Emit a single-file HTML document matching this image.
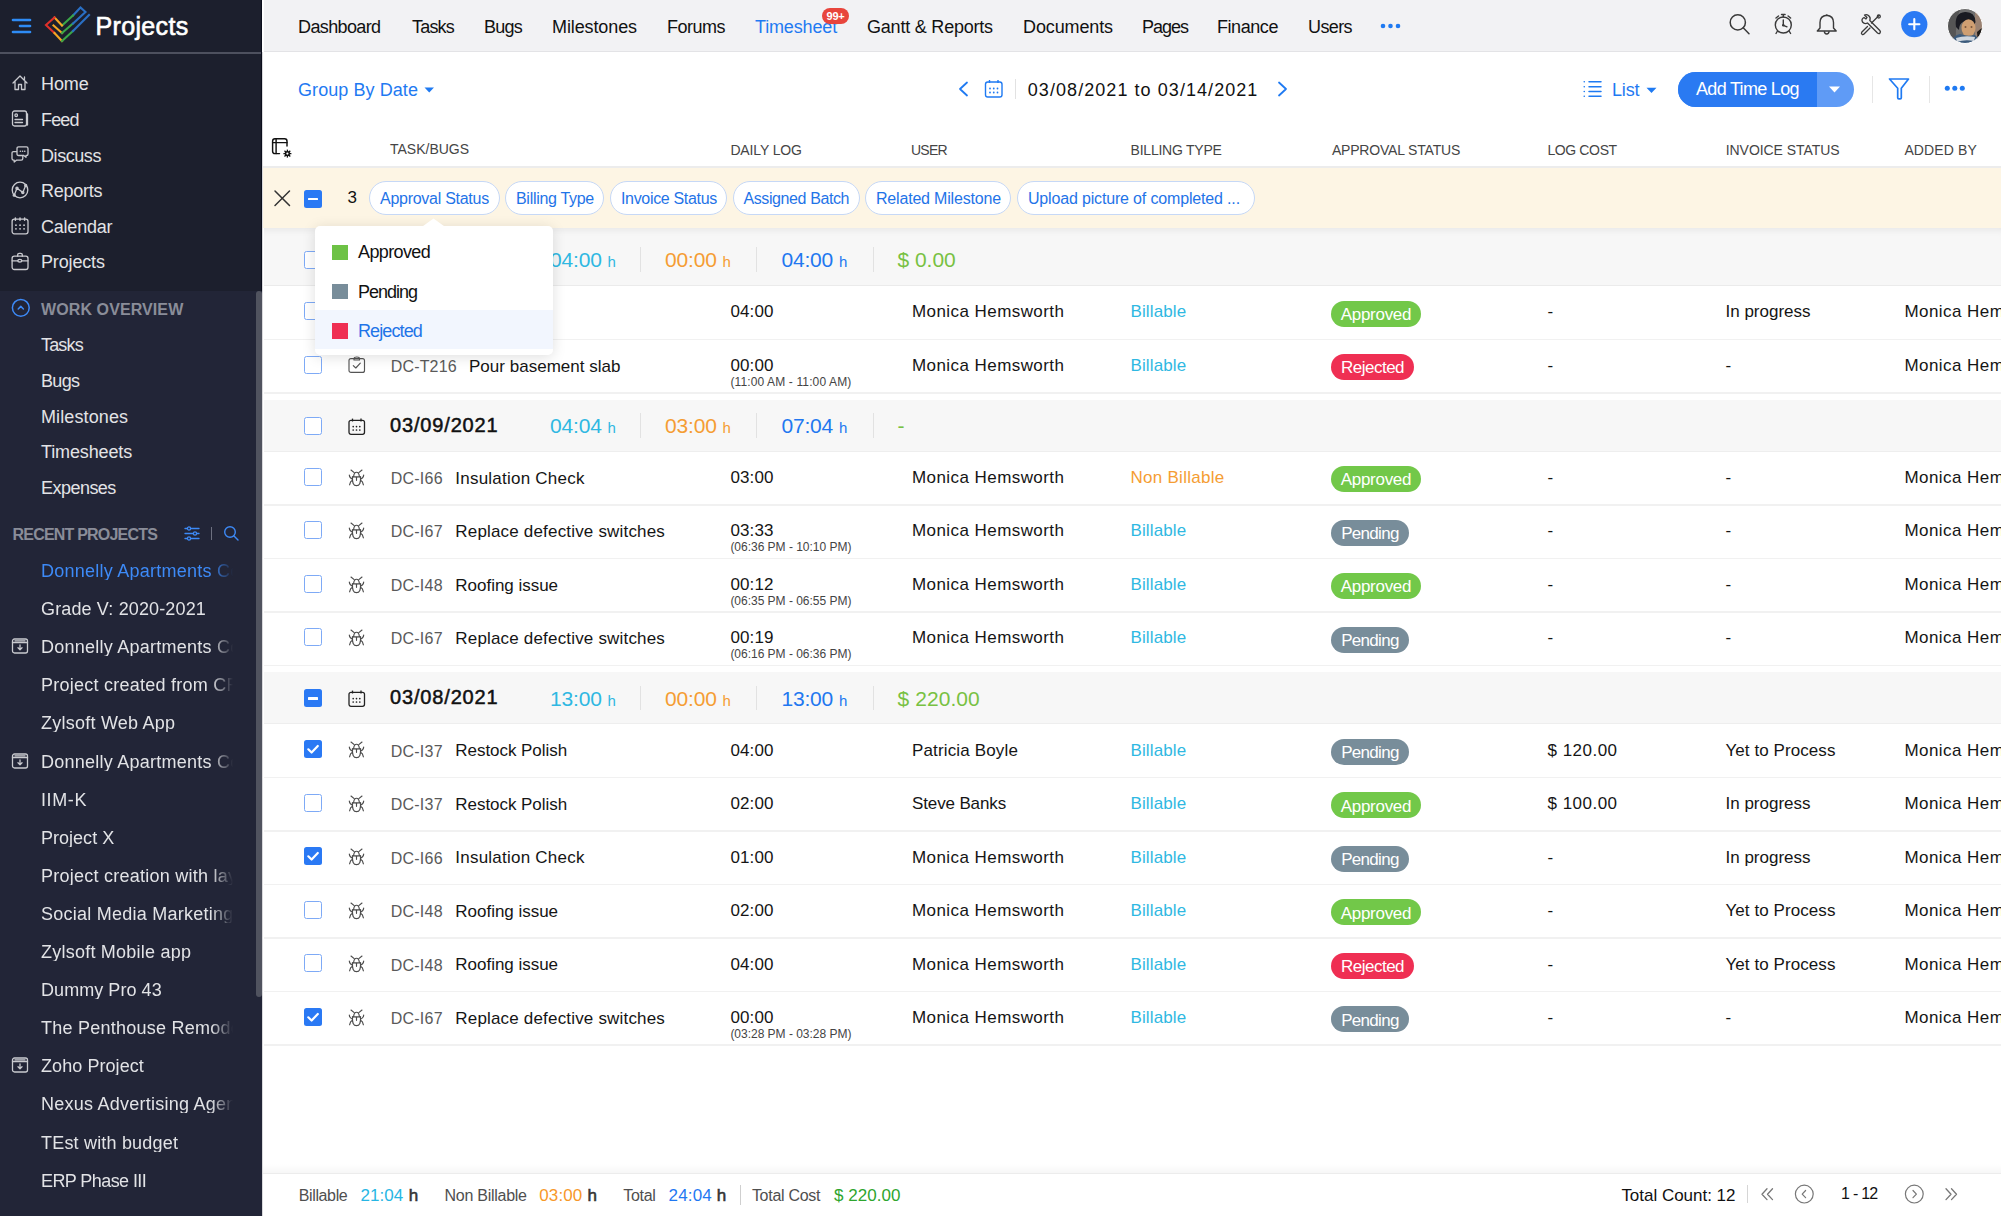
<!DOCTYPE html><html><head><meta charset="utf-8"><style>
*{box-sizing:border-box}
html,body{margin:0;padding:0;width:2001px;height:1216px;overflow:hidden;background:#fff;font-family:"Liberation Sans",sans-serif}
div{position:absolute;white-space:nowrap}
svg{position:absolute;overflow:visible}
.fade{-webkit-mask-image:linear-gradient(to right,#000 0,#000 170px,transparent 192px);width:192px;overflow:hidden}
</style></head><body>
<div style="left:0;top:0;width:262px;height:291px;background:#1c1f2d"></div>
<div style="left:0;top:291px;width:262px;height:925px;background:#222537"></div>
<div style="left:0;top:52px;width:262px;height:1.5px;background:#4d505e"></div>
<div style="left:261px;top:0;width:1px;height:291px;background:#0b0e1c"></div>
<div style="left:256px;top:291px;width:6px;height:706px;background:#50535f;border-radius:3px"></div>
<svg style="left:0;top:0" width="60" height="52"><g stroke="#2e8bf5" stroke-width="2.6" stroke-linecap="round"><line x1="13" y1="20" x2="30" y2="20"/><line x1="20" y1="26" x2="30" y2="26"/><line x1="13" y1="32" x2="30" y2="32"/></g></svg>
<svg style="left:0;top:0" width="95" height="52"><g fill="none" stroke-width="2.1" stroke-linecap="square" stroke-linejoin="miter">
<polyline stroke="#f6a623" points="53.5,25.5 62,33"/>
<polyline stroke="#3aa648" points="62,33 73,23.5"/>
<polyline stroke="#2a6fc4" points="73,23.5 85.5,12 80.5,7.5 73,15.5"/>
<polyline stroke="#3aa648" points="73,15.5 62,25.5"/>
<polyline stroke="#f6a623" points="62,25.5 54.5,17.5"/>
<polyline stroke="#e0302a" points="54.5,17.5 46,25 54.5,33"/>
<polyline stroke="#f6a623" points="54.5,33 62,41"/>
<polyline stroke="#3aa648" points="62,41 73,31"/>
<polyline stroke="#2a6fc4" points="73,31 89,15"/>
</g></svg>
<div style="left:95.5px;top:13.5px;font-size:25px;line-height:25px;color:#ffffff;-webkit-text-stroke:0.6px #ffffff;letter-spacing:0.34px;">Projects</div>
<div style="left:41.0px;top:75.3px;font-size:18px;line-height:18px;color:#e2e3e6;letter-spacing:-0.11px;">Home</div>
<div style="left:41.0px;top:110.9px;font-size:18px;line-height:18px;color:#e2e3e6;letter-spacing:-0.86px;">Feed</div>
<div style="left:41.0px;top:146.5px;font-size:18px;line-height:18px;color:#e2e3e6;letter-spacing:-0.43px;">Discuss</div>
<div style="left:41.0px;top:182.1px;font-size:18px;line-height:18px;color:#e2e3e6;letter-spacing:-0.25px;">Reports</div>
<div style="left:41.0px;top:217.7px;font-size:18px;line-height:18px;color:#e2e3e6;letter-spacing:-0.22px;">Calendar</div>
<div style="left:41.0px;top:253.3px;font-size:18px;line-height:18px;color:#e2e3e6;letter-spacing:-0.15px;">Projects</div>
<svg style="left:11px;top:73px" width="20" height="20" viewBox="0 0 20 20"><g fill="none" stroke="#c9cacf" stroke-width="1.3" stroke-linecap="round" stroke-linejoin="round"><path d="M2 10 L9 3 L16 10 M4 8.5 V16.5 H7.5 V11.5 H10.5 V16.5 H14 V8.5 M13.5 4 V6.5"/></g></svg>
<svg style="left:11px;top:109px" width="20" height="20" viewBox="0 0 20 20"><g fill="none" stroke="#c9cacf" stroke-width="1.3" stroke-linecap="round" stroke-linejoin="round"><rect x="1.5" y="2" width="14" height="15" rx="2"/><circle cx="5.2" cy="6.2" r="1.3"/><line x1="4" y1="10.5" x2="11.5" y2="10.5"/><line x1="4" y1="13.5" x2="11.5" y2="13.5"/><path d="M15.5 5 H16.5 V16"/></g></svg>
<svg style="left:11px;top:145px" width="20" height="20" viewBox="0 0 20 20"><g fill="none" stroke="#c9cacf" stroke-width="1.3" stroke-linecap="round" stroke-linejoin="round"><path d="M5.6 6.6 H2.6 Q1 6.6 1 8.2 V13.6 Q1 15.2 2.6 15.2 H3.2 V17 L5.4 15.2 H10.2 Q11.8 15.2 11.8 13.6 V11.2"/><path d="M7.6 1.9 H15.4 Q17 1.9 17 3.5 V8.9 Q17 10.5 15.4 10.5 H15 V12.3 L12.8 10.5 H7.6 Q6 10.5 6 8.9 V3.5 Q6 1.9 7.6 1.9 Z"/><g stroke-width="1.5"><line x1="9.3" y1="6.2" x2="9.4" y2="6.2"/><line x1="11.5" y1="6.2" x2="11.6" y2="6.2"/><line x1="13.7" y1="6.2" x2="13.8" y2="6.2"/></g></g></svg>
<svg style="left:11px;top:181px" width="20" height="20" viewBox="0 0 20 20"><g fill="none" stroke="#c9cacf" stroke-width="1.3" stroke-linecap="round" stroke-linejoin="round"><circle cx="9" cy="9" r="7.8"/><path d="M3.2 14.2 L6 7.3 L11.8 11.4 L14.7 4.5"/><circle cx="6" cy="7.3" r="1.1"/><circle cx="11.8" cy="11.4" r="1.1"/><circle cx="14.7" cy="4.5" r="1"/><circle cx="3.2" cy="14.2" r="1"/></g></svg>
<svg style="left:11px;top:217px" width="20" height="20" viewBox="0 0 20 20"><g fill="none" stroke="#c9cacf" stroke-width="1.3" stroke-linecap="round" stroke-linejoin="round"><rect x="1.1" y="2.2" width="15.9" height="14.6" rx="2.2"/><g stroke-width="1.5"><line x1="4.4" y1="1" x2="4.4" y2="3.2"/><line x1="9" y1="1" x2="9" y2="3.2"/><line x1="13.6" y1="1" x2="13.6" y2="3.2"/></g><g stroke-width="1.7"><line x1="4.9" y1="8.2" x2="5" y2="8.2"/><line x1="9" y1="8.2" x2="9.1" y2="8.2"/><line x1="13" y1="8.2" x2="13.1" y2="8.2"/><line x1="4.9" y1="11.8" x2="5" y2="11.8"/><line x1="9" y1="11.8" x2="9.1" y2="11.8"/><line x1="13" y1="11.8" x2="13.1" y2="11.8"/></g></g></svg>
<svg style="left:11px;top:252px" width="20" height="20" viewBox="0 0 20 20"><g fill="none" stroke="#c9cacf" stroke-width="1.3" stroke-linecap="round" stroke-linejoin="round"><rect x="1.1" y="4.2" width="15.9" height="13.3" rx="2.2"/><path d="M6.7 4.2 V2.8 Q6.7 1.3 8.2 1.3 H9.8 Q11.3 1.3 11.3 2.8 V4.2"/><line x1="1.1" y1="8.8" x2="6.8" y2="8.8"/><line x1="10.8" y1="8.8" x2="17" y2="8.8"/><ellipse cx="8.8" cy="8.7" rx="2" ry="1.3"/></g></svg>
<svg style="left:11px;top:299px" width="20" height="20"><circle cx="9.8" cy="8.8" r="8.4" fill="none" stroke="#3d8af7" stroke-width="1.5"/><path d="M7.2 10 L9.8 7.4 L12.4 10" fill="none" stroke="#3d8af7" stroke-width="1.5" stroke-linecap="round" stroke-linejoin="round"/></svg>
<div style="left:41.0px;top:302.0px;font-size:16px;line-height:16px;color:#8a8d99;font-weight:bold;letter-spacing:0.10px;">WORK OVERVIEW</div>
<div style="left:41.0px;top:336.3px;font-size:18px;line-height:18px;color:#e2e3e6;letter-spacing:-0.82px;">Tasks</div>
<div style="left:41.0px;top:371.9px;font-size:18px;line-height:18px;color:#e2e3e6;letter-spacing:-0.66px;">Bugs</div>
<div style="left:41.0px;top:407.6px;font-size:18px;line-height:18px;color:#e2e3e6;letter-spacing:0.12px;">Milestones</div>
<div style="left:41.0px;top:443.2px;font-size:18px;line-height:18px;color:#e2e3e6;letter-spacing:-0.13px;">Timesheets</div>
<div style="left:41.0px;top:478.9px;font-size:18px;line-height:18px;color:#e2e3e6;letter-spacing:-0.53px;">Expenses</div>
<div style="left:12.6px;top:527.0px;font-size:16px;line-height:16px;color:#8a8d99;font-weight:bold;letter-spacing:-0.80px;">RECENT PROJECTS</div>
<svg style="left:184px;top:525px" width="18" height="18"><g fill="none" stroke="#3d8af7" stroke-width="1.3" stroke-linecap="round"><line x1="1" y1="3.5" x2="15" y2="3.5"/><line x1="1" y1="8.5" x2="15" y2="8.5"/><line x1="1" y1="13.5" x2="15" y2="13.5"/><circle cx="5" cy="3.5" r="1.6" fill="#222537"/><circle cx="11" cy="8.5" r="1.6" fill="#222537"/><circle cx="5" cy="13.5" r="1.6" fill="#222537"/></g></svg>
<div style="left:211px;top:527px;width:1.2px;height:13px;background:#6d7080"></div>
<svg style="left:223px;top:525px" width="18" height="18"><g fill="none" stroke="#3d8af7" stroke-width="1.4" stroke-linecap="round"><circle cx="7" cy="7" r="5.3"/><line x1="11" y1="11" x2="15" y2="15"/></g></svg>
<div class="fade" style="left:41.0px;top:562.0px;font-size:18px;line-height:18px;color:#3d8af7;letter-spacing:0.25px;">Donnelly Apartments Construction</div>
<div class="fade" style="left:41.0px;top:600.1px;font-size:18px;line-height:18px;color:#e2e3e6;letter-spacing:0.14px;">Grade V: 2020-2021</div>
<div class="fade" style="left:41.0px;top:638.2px;font-size:18px;line-height:18px;color:#e2e3e6;letter-spacing:0.25px;">Donnelly Apartments Construction</div>
<svg style="left:11px;top:637.2px" width="20" height="20" viewBox="0 0 20 20"><g fill="none" stroke="#c9cacf" stroke-width="1.3" stroke-linecap="round" stroke-linejoin="round"><rect x="1.5" y="2" width="15" height="14" rx="2"/><line x1="1.5" y1="5.5" x2="16.5" y2="5.5"/><line x1="4" y1="3.8" x2="14" y2="3.8"/><path d="M9 8 V12.5 M7 10.8 L9 12.7 L11 10.8"/></g></svg>
<div class="fade" style="left:41.0px;top:676.3px;font-size:18px;line-height:18px;color:#e2e3e6;letter-spacing:0.25px;">Project created from CRM</div>
<div class="fade" style="left:41.0px;top:714.4px;font-size:18px;line-height:18px;color:#e2e3e6;letter-spacing:0.24px;">Zylsoft Web App</div>
<div class="fade" style="left:41.0px;top:752.5px;font-size:18px;line-height:18px;color:#e2e3e6;letter-spacing:0.25px;">Donnelly Apartments Construction</div>
<svg style="left:11px;top:751.5px" width="20" height="20" viewBox="0 0 20 20"><g fill="none" stroke="#c9cacf" stroke-width="1.3" stroke-linecap="round" stroke-linejoin="round"><rect x="1.5" y="2" width="15" height="14" rx="2"/><line x1="1.5" y1="5.5" x2="16.5" y2="5.5"/><line x1="4" y1="3.8" x2="14" y2="3.8"/><path d="M9 8 V12.5 M7 10.8 L9 12.7 L11 10.8"/></g></svg>
<div class="fade" style="left:41.0px;top:790.6px;font-size:18px;line-height:18px;color:#e2e3e6;letter-spacing:0.60px;">IIM-K</div>
<div class="fade" style="left:41.0px;top:828.7px;font-size:18px;line-height:18px;color:#e2e3e6;letter-spacing:0.02px;">Project X</div>
<div class="fade" style="left:41.0px;top:866.8px;font-size:18px;line-height:18px;color:#e2e3e6;letter-spacing:0.25px;">Project creation with layout</div>
<div class="fade" style="left:41.0px;top:904.9px;font-size:18px;line-height:18px;color:#e2e3e6;letter-spacing:0.25px;">Social Media Marketing</div>
<div class="fade" style="left:41.0px;top:943.0px;font-size:18px;line-height:18px;color:#e2e3e6;letter-spacing:0.23px;">Zylsoft Mobile app</div>
<div class="fade" style="left:41.0px;top:981.1px;font-size:18px;line-height:18px;color:#e2e3e6;letter-spacing:0.06px;">Dummy Pro 43</div>
<div class="fade" style="left:41.0px;top:1019.2px;font-size:18px;line-height:18px;color:#e2e3e6;letter-spacing:0.25px;">The Penthouse Remodel</div>
<div class="fade" style="left:41.0px;top:1057.3px;font-size:18px;line-height:18px;color:#e2e3e6;letter-spacing:0.07px;">Zoho Project</div>
<svg style="left:11px;top:1056.3px" width="20" height="20" viewBox="0 0 20 20"><g fill="none" stroke="#c9cacf" stroke-width="1.3" stroke-linecap="round" stroke-linejoin="round"><rect x="1.5" y="2" width="15" height="14" rx="2"/><line x1="1.5" y1="5.5" x2="16.5" y2="5.5"/><line x1="4" y1="3.8" x2="14" y2="3.8"/><path d="M9 8 V12.5 M7 10.8 L9 12.7 L11 10.8"/></g></svg>
<div class="fade" style="left:41.0px;top:1095.4px;font-size:18px;line-height:18px;color:#e2e3e6;letter-spacing:0.25px;">Nexus Advertising Agency</div>
<div class="fade" style="left:41.0px;top:1133.5px;font-size:18px;line-height:18px;color:#e2e3e6;letter-spacing:0.19px;">TEst with budget</div>
<div class="fade" style="left:41.0px;top:1171.6px;font-size:18px;line-height:18px;color:#e2e3e6;letter-spacing:-0.58px;">ERP Phase III</div>
<div style="left:262px;top:0;width:1739px;height:53px;background:#fff"></div><div style="left:264px;top:0;width:1737px;height:52px;background:#f2f2f4;border-bottom:1px solid #e3e3e6"></div>
<div style="left:262px;top:52px;width:1px;height:1164px;background:#d9d9dc"></div>
<div style="left:298.0px;top:18.0px;font-size:18px;line-height:18px;color:#111111;letter-spacing:-0.62px;">Dashboard</div>
<div style="left:412.0px;top:18.0px;font-size:18px;line-height:18px;color:#111111;letter-spacing:-0.80px;">Tasks</div>
<div style="left:484.0px;top:18.0px;font-size:18px;line-height:18px;color:#111111;letter-spacing:-0.76px;">Bugs</div>
<div style="left:552.0px;top:18.0px;font-size:18px;line-height:18px;color:#111111;letter-spacing:-0.11px;">Milestones</div>
<div style="left:667.0px;top:18.0px;font-size:18px;line-height:18px;color:#111111;letter-spacing:-0.51px;">Forums</div>
<div style="left:755.0px;top:18.0px;font-size:18px;line-height:18px;color:#1f7af2;letter-spacing:-0.15px;">Timesheet</div>
<div style="left:867.0px;top:18.0px;font-size:18px;line-height:18px;color:#111111;letter-spacing:-0.21px;">Gantt &amp; Reports</div>
<div style="left:1023.0px;top:18.0px;font-size:18px;line-height:18px;color:#111111;letter-spacing:-0.12px;">Documents</div>
<div style="left:1142.0px;top:18.0px;font-size:18px;line-height:18px;color:#111111;letter-spacing:-1.01px;">Pages</div>
<div style="left:1217.0px;top:18.0px;font-size:18px;line-height:18px;color:#111111;letter-spacing:-0.44px;">Finance</div>
<div style="left:1308.0px;top:18.0px;font-size:18px;line-height:18px;color:#111111;letter-spacing:-0.60px;">Users</div>
<svg style="left:1380px;top:22px" width="22" height="8"><g fill="#1f7af2"><circle cx="3" cy="4" r="2.3"/><circle cx="10.5" cy="4" r="2.3"/><circle cx="18" cy="4" r="2.3"/></g></svg>
<div style="left:822px;top:8px;width:27px;height:16px;border-radius:8px;background:#e8453c;color:#fff;font-size:11px;line-height:16px;text-align:center;font-weight:bold;letter-spacing:-0.3px">99+</div>
<svg style="left:1720px;top:0" width="45" height="52"><g fill="none" stroke="#3a3a3a" stroke-width="1.5" stroke-linecap="round"><circle cx="17.8" cy="22.4" r="7.6"/><line x1="23.2" y1="27.8" x2="29" y2="33.8"/></g></svg>
<svg style="left:1760px;top:0" width="45" height="52"><g fill="none" stroke="#3a3a3a" stroke-width="1.4" stroke-linecap="round" stroke-linejoin="round"><circle cx="23.3" cy="25" r="8"/><path d="M23.3 20 V25.3 L27 26.8"/><path d="M21.5 14.5 H25.1 M23.3 14.5 V17"/><path d="M16 18 L18.5 16 M30.6 18 L28.1 16"/><path d="M17.5 31 L16 33.5 M29.1 31 L30.6 33.5"/></g><circle cx="23.3" cy="25.2" r="1.3" fill="#3a3a3a"/></svg>
<svg style="left:1800px;top:0" width="45" height="52"><g fill="none" stroke="#3a3a3a" stroke-width="1.4" stroke-linejoin="round"><path d="M17.3 31 H36.2 L33.5 28 V22.5 Q33.5 16 26.7 15.3 Q20 16 20 22.5 V28 Z"/><path d="M24.3 31.3 Q24.5 34 26.7 34 Q28.9 34 29.1 31.3"/><line x1="26.7" y1="14.5" x2="26.7" y2="15.5"/></g></svg>
<svg style="left:1850px;top:0" width="45" height="52"><g fill="none" stroke="#3a3a3a" stroke-width="1.3" stroke-linecap="round" stroke-linejoin="round"><path d="M14 17.5 Q11 19 12.5 22 Q14.5 24.5 17.5 23 L27.5 33 Q29 34.2 30 33 Q31 32 29.8 30.5 L19.8 20.5 Q21 17.5 18.5 15.5 Q16.5 14 14.5 15 L17 17.5 L16 19 Z"/><path d="M29 15.5 L27.5 17 L21.5 23 M17.5 26.5 L11.7 32.3 Q11 33.5 12 34.2 Q13 35 14 34 L20 28"/><circle cx="28.8" cy="16.5" r="1.5"/></g></svg>
<svg style="left:1900px;top:10px" width="28" height="28"><circle cx="14.3" cy="14.2" r="13.1" fill="#2a7af4"/><g stroke="#fff" stroke-width="2.1" stroke-linecap="round"><line x1="9.2" y1="14.2" x2="19.4" y2="14.2"/><line x1="14.3" y1="9.1" x2="14.3" y2="19.3"/></g></svg>
<svg style="left:1947px;top:8px" width="36" height="36"><defs><clipPath id="av"><circle cx="18" cy="18" r="17.4"/></clipPath></defs><g clip-path="url(#av)">
<rect width="36" height="36" fill="#6e6e6e"/><path d="M0 0 H14 Q8 10 9 36 H0 Z" fill="#555"/><rect x="28" y="0" width="8" height="36" fill="#9a8272"/><path d="M30 24 L36 19 L36 36 L31 36 Z" fill="#1e1a18"/>
<path d="M9 19 Q7 5 18 4 Q28 3.5 28.5 14 L27 18 Q22 12 16 14 Q12 16 12 22 Z" fill="#1a1b22"/>
<ellipse cx="21.5" cy="20" rx="7" ry="8.8" fill="#cf9f72"/>
<ellipse cx="18.5" cy="19" rx="1" ry="0.7" fill="#5a3b28"/><ellipse cx="24.5" cy="19" rx="1" ry="0.7" fill="#5a3b28"/>
<path d="M4 36 Q6 27 13 26 Q20 29 28 27 Q32 30 31 36 Z" fill="#3c5b7c"/>
<path d="M9 30 Q18 27 28 29 L27 33 Q18 31 10 34 Z" fill="#cfd6de"/>
</g><circle cx="18" cy="18" r="17.5" fill="none" stroke="#fff" stroke-width="1"/></svg>
<div style="left:298.0px;top:80.5px;font-size:18px;line-height:18px;color:#1f7af2;letter-spacing:0.07px;">Group By Date</div>
<svg style="left:424px;top:86px" width="12" height="8"><path d="M0.5 1.5 L10 1.5 L5.25 6.5 Z" fill="#1f7af2"/></svg>
<svg style="left:955px;top:78px" width="16" height="22"><path d="M12 4.5 L5 11 L12 17.5" fill="none" stroke="#1f7af2" stroke-width="1.8" stroke-linecap="round" stroke-linejoin="round"/></svg>
<svg style="left:984px;top:79px" width="21" height="20"><g fill="none" stroke="#1f7af2" stroke-width="1.4"><rect x="1.5" y="3" width="16.5" height="15" rx="2.2"/><line x1="5.5" y1="1" x2="5.5" y2="4"/><line x1="14" y1="1" x2="14" y2="4"/></g><g fill="#1f7af2"><circle cx="6" cy="9.5" r=".9"/><circle cx="9.75" cy="9.5" r=".9"/><circle cx="13.5" cy="9.5" r=".9"/><circle cx="6" cy="13.5" r=".9"/><circle cx="9.75" cy="13.5" r=".9"/><circle cx="13.5" cy="13.5" r=".9"/></g></svg>
<div style="left:1015px;top:78.5px;width:1px;height:20.5px;background:#e2e2e2"></div>
<div style="left:1027.8px;top:80.6px;font-size:18px;line-height:18px;color:#111;letter-spacing:1.06px;">03/08/2021 to 03/14/2021</div>
<svg style="left:1274px;top:78px" width="16" height="22"><path d="M5 4.5 L12 11 L5 17.5" fill="none" stroke="#1f7af2" stroke-width="1.8" stroke-linecap="round" stroke-linejoin="round"/></svg>
<svg style="left:1582px;top:79px" width="22" height="20"><g stroke="#1f7af2" stroke-width="1.5" stroke-linecap="round"><line x1="2.2" y1="2.8" x2="2.3" y2="2.8"/><line x1="2.2" y1="7.7" x2="2.3" y2="7.7"/><line x1="2.2" y1="12.6" x2="2.3" y2="12.6"/><line x1="2.2" y1="17.3" x2="2.3" y2="17.3"/><line x1="7" y1="2.8" x2="19" y2="2.8"/><line x1="7" y1="7.7" x2="19" y2="7.7"/><line x1="7" y1="12.6" x2="19" y2="12.6"/><line x1="7" y1="17.3" x2="19" y2="17.3"/></g></svg>
<div style="left:1612.0px;top:80.7px;font-size:18px;line-height:18px;color:#1f7af2;letter-spacing:-0.18px;">List</div>
<svg style="left:1646px;top:86px" width="12" height="8"><path d="M0.5 1.8 L10.5 1.8 L5.5 7 Z" fill="#1f7af2"/></svg>
<div style="left:1678px;top:71.5px;width:176px;height:35px;border-radius:17.5px;background:#5f9bf6;overflow:hidden"><div style="left:0;top:0;width:139px;height:35px;background:#2a7af2"></div></div>
<div style="left:1696.0px;top:79.6px;font-size:18px;line-height:18px;color:#ffffff;letter-spacing:-0.69px;">Add Time Log</div>
<svg style="left:1828px;top:85px" width="14" height="9"><path d="M1 1.5 L12 1.5 L6.5 7.5 Z" fill="#fff"/></svg>
<div style="left:1872px;top:75.7px;width:1px;height:27.3px;background:#e6e6e6"></div>
<svg style="left:1886px;top:76px" width="26" height="26"><path d="M3.5 3 H22.5 L15.3 12.2 V21.8 Q15.3 22.8 14.2 22.8 H12.8 Q11.7 22.8 11.7 21.8 V12.2 Z" fill="none" stroke="#1f7af2" stroke-width="1.7" stroke-linejoin="round"/></svg>
<div style="left:1928.5px;top:75.7px;width:1px;height:27.3px;background:#e6e6e6"></div>
<svg style="left:1942px;top:83px" width="26" height="11"><g fill="#1f7af2"><circle cx="5.3" cy="5.3" r="2.5"/><circle cx="12.8" cy="5.3" r="2.5"/><circle cx="20.3" cy="5.3" r="2.5"/></g></svg>
<svg style="left:270px;top:136px" width="24" height="24"><g fill="none" stroke="#111" stroke-width="1.45" stroke-linecap="round" stroke-linejoin="round"><path d="M9.5 17.6 H5 Q2.6 17.6 2.6 15.2 V5.2 Q2.6 2.8 5 2.8 H14.6 Q17 2.8 17 5.2 V10"/><line x1="2.6" y1="6.6" x2="17" y2="6.6"/><line x1="6.1" y1="3" x2="6.1" y2="17.6"/></g><g transform="translate(17.4,17.6)"><g stroke="#111" stroke-width="1.3"><line x1="0" y1="-4" x2="0" y2="4"/><line x1="-4" y1="0" x2="4" y2="0"/><line x1="-2.9" y1="-2.9" x2="2.9" y2="2.9"/><line x1="-2.9" y1="2.9" x2="2.9" y2="-2.9"/></g><circle r="2.6" fill="#111"/><circle r="1.1" fill="#fff"/></g></svg>
<div style="left:390.0px;top:141.5px;font-size:14px;line-height:14px;color:#454545;letter-spacing:-0.00px;">TASK/BUGS</div>
<div style="left:730.4px;top:142.5px;font-size:14px;line-height:14px;color:#454545;letter-spacing:-0.13px;">DAILY LOG</div>
<div style="left:911.0px;top:142.5px;font-size:14px;line-height:14px;color:#454545;letter-spacing:-0.75px;">USER</div>
<div style="left:1130.6px;top:142.5px;font-size:14px;line-height:14px;color:#454545;letter-spacing:-0.24px;">BILLING TYPE</div>
<div style="left:1331.9px;top:142.5px;font-size:14px;line-height:14px;color:#454545;letter-spacing:-0.18px;">APPROVAL STATUS</div>
<div style="left:1547.4px;top:142.5px;font-size:14px;line-height:14px;color:#454545;letter-spacing:-0.37px;">LOG COST</div>
<div style="left:1725.7px;top:142.5px;font-size:14px;line-height:14px;color:#454545;letter-spacing:-0.05px;">INVOICE STATUS</div>
<div style="left:1904.4px;top:142.5px;font-size:14px;line-height:14px;color:#454545;letter-spacing:0.13px;">ADDED BY</div>
<div style="left:263px;top:166px;width:1738px;height:2px;background:#ececec"></div>
<div style="left:263px;top:168px;width:1738px;height:60px;background:#fdf5e4"></div>
<svg style="left:270px;top:186px" width="24" height="24"><g stroke="#333" stroke-width="1.5" stroke-linecap="round"><line x1="5" y1="5" x2="19.5" y2="19.5"/><line x1="19.5" y1="5" x2="5" y2="19.5"/></g></svg>
<div style="left:304px;top:190px;width:18px;height:18px;border-radius:2.5px;background:#2a79f4"><div style="left:4.2px;top:7.8px;width:9.6px;height:2.6px;background:#fff;border-radius:0.5px"></div></div>
<div style="left:347.6px;top:189.0px;font-size:17px;line-height:17px;color:#111;">3</div>
<div style="left:369px;top:181px;width:131.0px;height:33.5px;border-radius:17px;border:1px solid #c6d8f6;background:#fff"></div>
<div style="left:380.0px;top:190.5px;font-size:16px;line-height:16px;color:#1f74e8;letter-spacing:-0.27px;">Approval Status</div>
<div style="left:505px;top:181px;width:99.0px;height:33.5px;border-radius:17px;border:1px solid #c6d8f6;background:#fff"></div>
<div style="left:516.0px;top:190.5px;font-size:16px;line-height:16px;color:#1f74e8;letter-spacing:-0.30px;">Billing Type</div>
<div style="left:610px;top:181px;width:117.0px;height:33.5px;border-radius:17px;border:1px solid #c6d8f6;background:#fff"></div>
<div style="left:621.0px;top:190.5px;font-size:16px;line-height:16px;color:#1f74e8;letter-spacing:-0.33px;">Invoice Status</div>
<div style="left:733.2px;top:181px;width:126.4px;height:33.5px;border-radius:17px;border:1px solid #c6d8f6;background:#fff"></div>
<div style="left:743.4px;top:190.5px;font-size:16px;line-height:16px;color:#1f74e8;letter-spacing:-0.39px;">Assigned Batch</div>
<div style="left:865.1px;top:181px;width:146.3px;height:33.5px;border-radius:17px;border:1px solid #c6d8f6;background:#fff"></div>
<div style="left:876.0px;top:190.5px;font-size:16px;line-height:16px;color:#1f74e8;letter-spacing:-0.19px;">Related Milestone</div>
<div style="left:1017.4px;top:181px;width:237.2px;height:33.5px;border-radius:17px;border:1px solid #c6d8f6;background:#fff"></div>
<div style="left:1027.9px;top:190.5px;font-size:16px;line-height:16px;color:#1f74e8;letter-spacing:-0.16px;">Upload picture of completed ...</div>
<div style="left:264px;top:228px;width:1737px;height:57.5px;background:#f7f7f7;border-bottom:1.2px solid #ebebeb;box-shadow:inset 0 7px 7px -5px rgba(0,0,0,0.07)"></div>
<div style="left:304px;top:251px;width:18px;height:18px;border-radius:2.5px;border:1.6px solid #7eaaf6;background:#fff"></div>
<div style="left:550.0px;top:249.3px;font-size:21px;line-height:21px;color:#2fb8e2;letter-spacing:-0.18px;">04:00</div>
<div style="left:607.5px;top:254.3px;font-size:15px;line-height:15px;color:#2fb8e2;">h</div>
<div style="left:665.0px;top:249.3px;font-size:21px;line-height:21px;color:#f59d33;letter-spacing:-0.18px;">00:00</div>
<div style="left:722.5px;top:254.3px;font-size:15px;line-height:15px;color:#f59d33;">h</div>
<div style="left:781.4px;top:249.3px;font-size:21px;line-height:21px;color:#2277f0;letter-spacing:-0.18px;">04:00</div>
<div style="left:838.9px;top:254.3px;font-size:15px;line-height:15px;color:#2277f0;">h</div>
<div style="left:640.4px;top:247px;width:1px;height:24.5px;background:#e2e2e2"></div>
<div style="left:755.5px;top:247px;width:1px;height:24.5px;background:#e2e2e2"></div>
<div style="left:872.5px;top:247px;width:1px;height:24.5px;background:#e2e2e2"></div>
<div style="left:897.6px;top:249.3px;font-size:21px;line-height:21px;color:#78c142;letter-spacing:-0.06px;">$ 0.00</div>
<div style="left:264px;top:338.75px;width:1737px;height:1.5px;background:#f1f1f1"></div>
<div style="left:304px;top:302px;width:18px;height:18px;border-radius:2.5px;border:1.6px solid #7eaaf6;background:#fff"></div>
<svg style="left:348px;top:302px" width="18" height="18"><g fill="none" stroke="#555" stroke-width="1.15" stroke-linecap="round" stroke-linejoin="round"><rect x="1" y="2.6" width="15.5" height="13.8" rx="2"/><path d="M6 2.6 Q6 1 8.75 1 Q11.5 1 11.5 2.6 V4 H6 Z"/><path d="M5.3 9.6 L7.8 12 L12.3 7.2"/></g></svg>
<div style="left:390.8px;top:305.4px;font-size:16px;line-height:16px;color:#5a5a5a;letter-spacing:0.15px;">DC-T215</div>
<div style="left:469.0px;top:304.2px;font-size:17px;line-height:17px;color:#151515;">Form work</div>
<div style="left:730.4px;top:303.4px;font-size:17px;line-height:17px;color:#151515;letter-spacing:0.15px;">04:00</div>
<div style="left:912.0px;top:303.4px;font-size:17px;line-height:17px;color:#151515;letter-spacing:0.43px;">Monica Hemsworth</div>
<div style="left:1130.5px;top:303.4px;font-size:17px;line-height:17px;color:#2fb8e2;letter-spacing:0.12px;">Billable</div>
<div style="left:1331.2px;top:300.6px;width:89.5px;height:26.2px;border-radius:13px;background:#72c849"></div><div style="left:1340.7px;top:305.9px;font-size:17px;line-height:17px;color:#fff;letter-spacing:-0.28px;">Approved</div>
<div style="left:1547.5px;top:303.4px;font-size:17px;line-height:17px;color:#151515;">-</div>
<div style="left:1725.5px;top:303.4px;font-size:17px;line-height:17px;color:#151515;letter-spacing:-0.00px;">In progress</div>
<div style="left:1904.5px;top:303.4px;font-size:17px;line-height:17px;color:#151515;letter-spacing:0.43px;">Monica Hemsworth</div>
<div style="left:264px;top:392.25px;width:1737px;height:1.5px;background:#f1f1f1"></div>
<div style="left:304px;top:355.5px;width:18px;height:18px;border-radius:2.5px;border:1.6px solid #7eaaf6;background:#fff"></div>
<svg style="left:348px;top:355.5px" width="18" height="18"><g fill="none" stroke="#555" stroke-width="1.15" stroke-linecap="round" stroke-linejoin="round"><rect x="1" y="2.6" width="15.5" height="13.8" rx="2"/><path d="M6 2.6 Q6 1 8.75 1 Q11.5 1 11.5 2.6 V4 H6 Z"/><path d="M5.3 9.6 L7.8 12 L12.3 7.2"/></g></svg>
<div style="left:390.8px;top:358.9px;font-size:16px;line-height:16px;color:#5a5a5a;letter-spacing:0.15px;">DC-T216</div>
<div style="left:469.0px;top:357.7px;font-size:17px;line-height:17px;color:#151515;letter-spacing:0.02px;">Pour basement slab</div>
<div style="left:730.4px;top:356.9px;font-size:17px;line-height:17px;color:#151515;letter-spacing:0.15px;">00:00</div>
<div style="left:730.4px;top:375.7px;font-size:12px;line-height:12px;color:#444;letter-spacing:0.13px;">(11:00 AM - 11:00 AM)</div>
<div style="left:912.0px;top:356.9px;font-size:17px;line-height:17px;color:#151515;letter-spacing:0.43px;">Monica Hemsworth</div>
<div style="left:1130.5px;top:356.9px;font-size:17px;line-height:17px;color:#2fb8e2;letter-spacing:0.12px;">Billable</div>
<div style="left:1331.2px;top:354.1px;width:82.5px;height:26.2px;border-radius:13px;background:#ef2f53"></div><div style="left:1341.0px;top:359.4px;font-size:17px;line-height:17px;color:#fff;letter-spacing:-0.51px;">Rejected</div>
<div style="left:1547.5px;top:356.9px;font-size:17px;line-height:17px;color:#151515;">-</div>
<div style="left:1725.5px;top:356.9px;font-size:17px;line-height:17px;color:#151515;">-</div>
<div style="left:1904.5px;top:356.9px;font-size:17px;line-height:17px;color:#151515;letter-spacing:0.43px;">Monica Hemsworth</div>
<div style="left:264px;top:399.5px;width:1737px;height:52px;background:#f7f7f7;border-bottom:1px solid #eeeeee"></div>
<div style="left:304px;top:416.5px;width:18px;height:18px;border-radius:2.5px;border:1.6px solid #7eaaf6;background:#fff"></div>
<svg style="left:348px;top:417.5px" width="18" height="18"><g fill="none" stroke="#222" stroke-width="1.3" stroke-linejoin="round"><rect x="1" y="2.3" width="15.5" height="14" rx="2"/><line x1="4.5" y1="0.6" x2="4.5" y2="3.5"/><line x1="13" y1="0.6" x2="13" y2="3.5"/></g><g fill="#222"><circle cx="5.2" cy="8.6" r=".85"/><circle cx="5.2" cy="12" r=".85"/><circle cx="8.5" cy="8.6" r=".85"/><circle cx="8.5" cy="12" r=".85"/><circle cx="11.8" cy="8.6" r=".85"/><circle cx="11.8" cy="12" r=".85"/></g></svg>
<div style="left:390.0px;top:414.6px;font-size:20px;line-height:20px;color:#111;-webkit-text-stroke:0.5px #111;letter-spacing:0.84px;">03/09/2021</div>
<div style="left:550.0px;top:415.0px;font-size:21px;line-height:21px;color:#2fb8e2;letter-spacing:-0.18px;">04:04</div>
<div style="left:607.5px;top:420.0px;font-size:15px;line-height:15px;color:#2fb8e2;">h</div>
<div style="left:665.0px;top:415.0px;font-size:21px;line-height:21px;color:#f59d33;letter-spacing:-0.18px;">03:00</div>
<div style="left:722.5px;top:420.0px;font-size:15px;line-height:15px;color:#f59d33;">h</div>
<div style="left:781.4px;top:415.0px;font-size:21px;line-height:21px;color:#2277f0;letter-spacing:-0.18px;">07:04</div>
<div style="left:838.9px;top:420.0px;font-size:15px;line-height:15px;color:#2277f0;">h</div>
<div style="left:640.4px;top:413.0px;width:1px;height:24.5px;background:#e2e2e2"></div>
<div style="left:755.5px;top:413.0px;width:1px;height:24.5px;background:#e2e2e2"></div>
<div style="left:872.5px;top:413.0px;width:1px;height:24.5px;background:#e2e2e2"></div>
<div style="left:897.6px;top:415.0px;font-size:21px;line-height:21px;color:#78c142;">-</div>
<div style="left:264px;top:504.25px;width:1737px;height:1.5px;background:#f1f1f1"></div>
<div style="left:304px;top:467.5px;width:18px;height:18px;border-radius:2.5px;border:1.6px solid #7eaaf6;background:#fff"></div>
<svg style="left:348px;top:467.5px" width="18" height="20"><g fill="none" stroke="#4d4d4d" stroke-width="1.15" stroke-linecap="round" stroke-linejoin="round"><path d="M3 2 L6.2 4.6 M14 2 L10.8 4.6"/><path d="M5.6 8.6 Q6 4.2 8.5 4.2 Q11 4.2 11.4 8.6"/><path d="M4.4 8.8 H12.6"/><path d="M4.5 8.8 Q3.8 17.6 8.5 17.6 Q13.2 17.6 12.5 8.8"/><path d="M8.5 9.2 V12.3"/><path d="M1.3 7 Q1.6 10.3 4.6 11.2 M4.4 12.2 Q2.2 13.2 1.6 16.8"/><path d="M15.7 7 Q15.4 10.3 12.4 11.2 M12.6 12.2 Q14.8 13.2 15.4 16.8"/></g></svg>
<div style="left:390.8px;top:470.9px;font-size:16px;line-height:16px;color:#5a5a5a;letter-spacing:0.21px;">DC-I66</div>
<div style="left:455.3px;top:469.7px;font-size:17px;line-height:17px;color:#151515;letter-spacing:0.23px;">Insulation Check</div>
<div style="left:730.4px;top:468.9px;font-size:17px;line-height:17px;color:#151515;letter-spacing:0.15px;">03:00</div>
<div style="left:912.0px;top:468.9px;font-size:17px;line-height:17px;color:#151515;letter-spacing:0.43px;">Monica Hemsworth</div>
<div style="left:1130.5px;top:468.9px;font-size:17px;line-height:17px;color:#f59d33;letter-spacing:0.27px;">Non Billable</div>
<div style="left:1331.2px;top:466.1px;width:89.5px;height:26.2px;border-radius:13px;background:#72c849"></div><div style="left:1340.7px;top:471.4px;font-size:17px;line-height:17px;color:#fff;letter-spacing:-0.28px;">Approved</div>
<div style="left:1547.5px;top:468.9px;font-size:17px;line-height:17px;color:#151515;">-</div>
<div style="left:1725.5px;top:468.9px;font-size:17px;line-height:17px;color:#151515;">-</div>
<div style="left:1904.5px;top:468.9px;font-size:17px;line-height:17px;color:#151515;letter-spacing:0.43px;">Monica Hemsworth</div>
<div style="left:264px;top:557.75px;width:1737px;height:1.5px;background:#f1f1f1"></div>
<div style="left:304px;top:521.0px;width:18px;height:18px;border-radius:2.5px;border:1.6px solid #7eaaf6;background:#fff"></div>
<svg style="left:348px;top:521.0px" width="18" height="20"><g fill="none" stroke="#4d4d4d" stroke-width="1.15" stroke-linecap="round" stroke-linejoin="round"><path d="M3 2 L6.2 4.6 M14 2 L10.8 4.6"/><path d="M5.6 8.6 Q6 4.2 8.5 4.2 Q11 4.2 11.4 8.6"/><path d="M4.4 8.8 H12.6"/><path d="M4.5 8.8 Q3.8 17.6 8.5 17.6 Q13.2 17.6 12.5 8.8"/><path d="M8.5 9.2 V12.3"/><path d="M1.3 7 Q1.6 10.3 4.6 11.2 M4.4 12.2 Q2.2 13.2 1.6 16.8"/><path d="M15.7 7 Q15.4 10.3 12.4 11.2 M12.6 12.2 Q14.8 13.2 15.4 16.8"/></g></svg>
<div style="left:390.8px;top:524.4px;font-size:16px;line-height:16px;color:#5a5a5a;letter-spacing:0.21px;">DC-I67</div>
<div style="left:455.3px;top:523.2px;font-size:17px;line-height:17px;color:#151515;letter-spacing:0.18px;">Replace defective switches</div>
<div style="left:730.4px;top:522.4px;font-size:17px;line-height:17px;color:#151515;letter-spacing:0.15px;">03:33</div>
<div style="left:730.4px;top:541.2px;font-size:12px;line-height:12px;color:#444;letter-spacing:-0.02px;">(06:36 PM - 10:10 PM)</div>
<div style="left:912.0px;top:522.4px;font-size:17px;line-height:17px;color:#151515;letter-spacing:0.43px;">Monica Hemsworth</div>
<div style="left:1130.5px;top:522.4px;font-size:17px;line-height:17px;color:#2fb8e2;letter-spacing:0.12px;">Billable</div>
<div style="left:1331.2px;top:519.6px;width:77.5px;height:26.2px;border-radius:13px;background:#788d9a"></div><div style="left:1341.2px;top:524.9px;font-size:17px;line-height:17px;color:#fff;letter-spacing:-0.70px;">Pending</div>
<div style="left:1547.5px;top:522.4px;font-size:17px;line-height:17px;color:#151515;">-</div>
<div style="left:1725.5px;top:522.4px;font-size:17px;line-height:17px;color:#151515;">-</div>
<div style="left:1904.5px;top:522.4px;font-size:17px;line-height:17px;color:#151515;letter-spacing:0.43px;">Monica Hemsworth</div>
<div style="left:264px;top:611.25px;width:1737px;height:1.5px;background:#f1f1f1"></div>
<div style="left:304px;top:574.5px;width:18px;height:18px;border-radius:2.5px;border:1.6px solid #7eaaf6;background:#fff"></div>
<svg style="left:348px;top:574.5px" width="18" height="20"><g fill="none" stroke="#4d4d4d" stroke-width="1.15" stroke-linecap="round" stroke-linejoin="round"><path d="M3 2 L6.2 4.6 M14 2 L10.8 4.6"/><path d="M5.6 8.6 Q6 4.2 8.5 4.2 Q11 4.2 11.4 8.6"/><path d="M4.4 8.8 H12.6"/><path d="M4.5 8.8 Q3.8 17.6 8.5 17.6 Q13.2 17.6 12.5 8.8"/><path d="M8.5 9.2 V12.3"/><path d="M1.3 7 Q1.6 10.3 4.6 11.2 M4.4 12.2 Q2.2 13.2 1.6 16.8"/><path d="M15.7 7 Q15.4 10.3 12.4 11.2 M12.6 12.2 Q14.8 13.2 15.4 16.8"/></g></svg>
<div style="left:390.8px;top:577.9px;font-size:16px;line-height:16px;color:#5a5a5a;letter-spacing:0.21px;">DC-I48</div>
<div style="left:455.3px;top:576.7px;font-size:17px;line-height:17px;color:#151515;letter-spacing:-0.02px;">Roofing issue</div>
<div style="left:730.4px;top:575.9px;font-size:17px;line-height:17px;color:#151515;letter-spacing:0.15px;">00:12</div>
<div style="left:730.4px;top:594.7px;font-size:12px;line-height:12px;color:#444;letter-spacing:-0.02px;">(06:35 PM - 06:55 PM)</div>
<div style="left:912.0px;top:575.9px;font-size:17px;line-height:17px;color:#151515;letter-spacing:0.43px;">Monica Hemsworth</div>
<div style="left:1130.5px;top:575.9px;font-size:17px;line-height:17px;color:#2fb8e2;letter-spacing:0.12px;">Billable</div>
<div style="left:1331.2px;top:573.1px;width:89.5px;height:26.2px;border-radius:13px;background:#72c849"></div><div style="left:1340.7px;top:578.4px;font-size:17px;line-height:17px;color:#fff;letter-spacing:-0.28px;">Approved</div>
<div style="left:1547.5px;top:575.9px;font-size:17px;line-height:17px;color:#151515;">-</div>
<div style="left:1725.5px;top:575.9px;font-size:17px;line-height:17px;color:#151515;">-</div>
<div style="left:1904.5px;top:575.9px;font-size:17px;line-height:17px;color:#151515;letter-spacing:0.43px;">Monica Hemsworth</div>
<div style="left:264px;top:664.75px;width:1737px;height:1.5px;background:#f1f1f1"></div>
<div style="left:304px;top:628.0px;width:18px;height:18px;border-radius:2.5px;border:1.6px solid #7eaaf6;background:#fff"></div>
<svg style="left:348px;top:628.0px" width="18" height="20"><g fill="none" stroke="#4d4d4d" stroke-width="1.15" stroke-linecap="round" stroke-linejoin="round"><path d="M3 2 L6.2 4.6 M14 2 L10.8 4.6"/><path d="M5.6 8.6 Q6 4.2 8.5 4.2 Q11 4.2 11.4 8.6"/><path d="M4.4 8.8 H12.6"/><path d="M4.5 8.8 Q3.8 17.6 8.5 17.6 Q13.2 17.6 12.5 8.8"/><path d="M8.5 9.2 V12.3"/><path d="M1.3 7 Q1.6 10.3 4.6 11.2 M4.4 12.2 Q2.2 13.2 1.6 16.8"/><path d="M15.7 7 Q15.4 10.3 12.4 11.2 M12.6 12.2 Q14.8 13.2 15.4 16.8"/></g></svg>
<div style="left:390.8px;top:631.4px;font-size:16px;line-height:16px;color:#5a5a5a;letter-spacing:0.21px;">DC-I67</div>
<div style="left:455.3px;top:630.2px;font-size:17px;line-height:17px;color:#151515;letter-spacing:0.18px;">Replace defective switches</div>
<div style="left:730.4px;top:629.4px;font-size:17px;line-height:17px;color:#151515;letter-spacing:0.15px;">00:19</div>
<div style="left:730.4px;top:648.2px;font-size:12px;line-height:12px;color:#444;letter-spacing:-0.02px;">(06:16 PM - 06:36 PM)</div>
<div style="left:912.0px;top:629.4px;font-size:17px;line-height:17px;color:#151515;letter-spacing:0.43px;">Monica Hemsworth</div>
<div style="left:1130.5px;top:629.4px;font-size:17px;line-height:17px;color:#2fb8e2;letter-spacing:0.12px;">Billable</div>
<div style="left:1331.2px;top:626.6px;width:77.5px;height:26.2px;border-radius:13px;background:#788d9a"></div><div style="left:1341.2px;top:631.9px;font-size:17px;line-height:17px;color:#fff;letter-spacing:-0.70px;">Pending</div>
<div style="left:1547.5px;top:629.4px;font-size:17px;line-height:17px;color:#151515;">-</div>
<div style="left:1725.5px;top:629.4px;font-size:17px;line-height:17px;color:#151515;">-</div>
<div style="left:1904.5px;top:629.4px;font-size:17px;line-height:17px;color:#151515;letter-spacing:0.43px;">Monica Hemsworth</div>
<div style="left:264px;top:672.2px;width:1737px;height:52px;background:#f7f7f7;border-bottom:1px solid #eeeeee"></div>
<div style="left:304px;top:689.2px;width:18px;height:18px;border-radius:2.5px;background:#2a79f4"><div style="left:4.2px;top:7.8px;width:9.6px;height:2.6px;background:#fff;border-radius:0.5px"></div></div>
<svg style="left:348px;top:690.2px" width="18" height="18"><g fill="none" stroke="#222" stroke-width="1.3" stroke-linejoin="round"><rect x="1" y="2.3" width="15.5" height="14" rx="2"/><line x1="4.5" y1="0.6" x2="4.5" y2="3.5"/><line x1="13" y1="0.6" x2="13" y2="3.5"/></g><g fill="#222"><circle cx="5.2" cy="8.6" r=".85"/><circle cx="5.2" cy="12" r=".85"/><circle cx="8.5" cy="8.6" r=".85"/><circle cx="8.5" cy="12" r=".85"/><circle cx="11.8" cy="8.6" r=".85"/><circle cx="11.8" cy="12" r=".85"/></g></svg>
<div style="left:390.0px;top:687.3px;font-size:20px;line-height:20px;color:#111;-webkit-text-stroke:0.5px #111;letter-spacing:0.84px;">03/08/2021</div>
<div style="left:550.0px;top:687.7px;font-size:21px;line-height:21px;color:#2fb8e2;letter-spacing:-0.18px;">13:00</div>
<div style="left:607.5px;top:692.7px;font-size:15px;line-height:15px;color:#2fb8e2;">h</div>
<div style="left:665.0px;top:687.7px;font-size:21px;line-height:21px;color:#f59d33;letter-spacing:-0.18px;">00:00</div>
<div style="left:722.5px;top:692.7px;font-size:15px;line-height:15px;color:#f59d33;">h</div>
<div style="left:781.4px;top:687.7px;font-size:21px;line-height:21px;color:#2277f0;letter-spacing:-0.18px;">13:00</div>
<div style="left:838.9px;top:692.7px;font-size:15px;line-height:15px;color:#2277f0;">h</div>
<div style="left:640.4px;top:685.7px;width:1px;height:24.5px;background:#e2e2e2"></div>
<div style="left:755.5px;top:685.7px;width:1px;height:24.5px;background:#e2e2e2"></div>
<div style="left:872.5px;top:685.7px;width:1px;height:24.5px;background:#e2e2e2"></div>
<div style="left:897.6px;top:687.7px;font-size:21px;line-height:21px;color:#78c142;letter-spacing:0.06px;">$ 220.00</div>
<div style="left:264px;top:776.95px;width:1737px;height:1.5px;background:#f1f1f1"></div>
<div style="left:304px;top:740.2px;width:18px;height:18px;border-radius:2.5px;background:#2a79f4"></div><svg style="left:304px;top:740.2px" width="18" height="18"><path d="M4.3 9.3 L7.6 12.5 L13.8 6" fill="none" stroke="#fff" stroke-width="2.2" stroke-linecap="round" stroke-linejoin="round"/></svg>
<svg style="left:348px;top:740.2px" width="18" height="20"><g fill="none" stroke="#4d4d4d" stroke-width="1.15" stroke-linecap="round" stroke-linejoin="round"><path d="M3 2 L6.2 4.6 M14 2 L10.8 4.6"/><path d="M5.6 8.6 Q6 4.2 8.5 4.2 Q11 4.2 11.4 8.6"/><path d="M4.4 8.8 H12.6"/><path d="M4.5 8.8 Q3.8 17.6 8.5 17.6 Q13.2 17.6 12.5 8.8"/><path d="M8.5 9.2 V12.3"/><path d="M1.3 7 Q1.6 10.3 4.6 11.2 M4.4 12.2 Q2.2 13.2 1.6 16.8"/><path d="M15.7 7 Q15.4 10.3 12.4 11.2 M12.6 12.2 Q14.8 13.2 15.4 16.8"/></g></svg>
<div style="left:390.8px;top:743.6px;font-size:16px;line-height:16px;color:#5a5a5a;letter-spacing:0.21px;">DC-I37</div>
<div style="left:455.3px;top:742.4px;font-size:17px;line-height:17px;color:#151515;letter-spacing:-0.05px;">Restock Polish</div>
<div style="left:730.4px;top:741.6px;font-size:17px;line-height:17px;color:#151515;letter-spacing:0.15px;">04:00</div>
<div style="left:912.0px;top:741.6px;font-size:17px;line-height:17px;color:#151515;letter-spacing:0.15px;">Patricia Boyle</div>
<div style="left:1130.5px;top:741.6px;font-size:17px;line-height:17px;color:#2fb8e2;letter-spacing:0.12px;">Billable</div>
<div style="left:1331.2px;top:738.8000000000001px;width:77.5px;height:26.2px;border-radius:13px;background:#788d9a"></div><div style="left:1341.2px;top:744.1px;font-size:17px;line-height:17px;color:#fff;letter-spacing:-0.70px;">Pending</div>
<div style="left:1547.5px;top:741.6px;font-size:17px;line-height:17px;color:#151515;letter-spacing:0.48px;">$ 120.00</div>
<div style="left:1725.5px;top:741.6px;font-size:17px;line-height:17px;color:#151515;letter-spacing:0.07px;">Yet to Process</div>
<div style="left:1904.5px;top:741.6px;font-size:17px;line-height:17px;color:#151515;letter-spacing:0.43px;">Monica Hemsworth</div>
<div style="left:264px;top:830.45px;width:1737px;height:1.5px;background:#f1f1f1"></div>
<div style="left:304px;top:793.7px;width:18px;height:18px;border-radius:2.5px;border:1.6px solid #7eaaf6;background:#fff"></div>
<svg style="left:348px;top:793.7px" width="18" height="20"><g fill="none" stroke="#4d4d4d" stroke-width="1.15" stroke-linecap="round" stroke-linejoin="round"><path d="M3 2 L6.2 4.6 M14 2 L10.8 4.6"/><path d="M5.6 8.6 Q6 4.2 8.5 4.2 Q11 4.2 11.4 8.6"/><path d="M4.4 8.8 H12.6"/><path d="M4.5 8.8 Q3.8 17.6 8.5 17.6 Q13.2 17.6 12.5 8.8"/><path d="M8.5 9.2 V12.3"/><path d="M1.3 7 Q1.6 10.3 4.6 11.2 M4.4 12.2 Q2.2 13.2 1.6 16.8"/><path d="M15.7 7 Q15.4 10.3 12.4 11.2 M12.6 12.2 Q14.8 13.2 15.4 16.8"/></g></svg>
<div style="left:390.8px;top:797.1px;font-size:16px;line-height:16px;color:#5a5a5a;letter-spacing:0.21px;">DC-I37</div>
<div style="left:455.3px;top:795.9px;font-size:17px;line-height:17px;color:#151515;letter-spacing:-0.05px;">Restock Polish</div>
<div style="left:730.4px;top:795.1px;font-size:17px;line-height:17px;color:#151515;letter-spacing:0.15px;">02:00</div>
<div style="left:912.0px;top:795.1px;font-size:17px;line-height:17px;color:#151515;letter-spacing:-0.13px;">Steve Banks</div>
<div style="left:1130.5px;top:795.1px;font-size:17px;line-height:17px;color:#2fb8e2;letter-spacing:0.12px;">Billable</div>
<div style="left:1331.2px;top:792.3000000000001px;width:89.5px;height:26.2px;border-radius:13px;background:#72c849"></div><div style="left:1340.7px;top:797.6px;font-size:17px;line-height:17px;color:#fff;letter-spacing:-0.28px;">Approved</div>
<div style="left:1547.5px;top:795.1px;font-size:17px;line-height:17px;color:#151515;letter-spacing:0.48px;">$ 100.00</div>
<div style="left:1725.5px;top:795.1px;font-size:17px;line-height:17px;color:#151515;letter-spacing:-0.00px;">In progress</div>
<div style="left:1904.5px;top:795.1px;font-size:17px;line-height:17px;color:#151515;letter-spacing:0.43px;">Monica Hemsworth</div>
<div style="left:264px;top:883.95px;width:1737px;height:1.5px;background:#f1f1f1"></div>
<div style="left:304px;top:847.2px;width:18px;height:18px;border-radius:2.5px;background:#2a79f4"></div><svg style="left:304px;top:847.2px" width="18" height="18"><path d="M4.3 9.3 L7.6 12.5 L13.8 6" fill="none" stroke="#fff" stroke-width="2.2" stroke-linecap="round" stroke-linejoin="round"/></svg>
<svg style="left:348px;top:847.2px" width="18" height="20"><g fill="none" stroke="#4d4d4d" stroke-width="1.15" stroke-linecap="round" stroke-linejoin="round"><path d="M3 2 L6.2 4.6 M14 2 L10.8 4.6"/><path d="M5.6 8.6 Q6 4.2 8.5 4.2 Q11 4.2 11.4 8.6"/><path d="M4.4 8.8 H12.6"/><path d="M4.5 8.8 Q3.8 17.6 8.5 17.6 Q13.2 17.6 12.5 8.8"/><path d="M8.5 9.2 V12.3"/><path d="M1.3 7 Q1.6 10.3 4.6 11.2 M4.4 12.2 Q2.2 13.2 1.6 16.8"/><path d="M15.7 7 Q15.4 10.3 12.4 11.2 M12.6 12.2 Q14.8 13.2 15.4 16.8"/></g></svg>
<div style="left:390.8px;top:850.6px;font-size:16px;line-height:16px;color:#5a5a5a;letter-spacing:0.21px;">DC-I66</div>
<div style="left:455.3px;top:849.4px;font-size:17px;line-height:17px;color:#151515;letter-spacing:0.23px;">Insulation Check</div>
<div style="left:730.4px;top:848.6px;font-size:17px;line-height:17px;color:#151515;letter-spacing:0.15px;">01:00</div>
<div style="left:912.0px;top:848.6px;font-size:17px;line-height:17px;color:#151515;letter-spacing:0.43px;">Monica Hemsworth</div>
<div style="left:1130.5px;top:848.6px;font-size:17px;line-height:17px;color:#2fb8e2;letter-spacing:0.12px;">Billable</div>
<div style="left:1331.2px;top:845.8000000000001px;width:77.5px;height:26.2px;border-radius:13px;background:#788d9a"></div><div style="left:1341.2px;top:851.1px;font-size:17px;line-height:17px;color:#fff;letter-spacing:-0.70px;">Pending</div>
<div style="left:1547.5px;top:848.6px;font-size:17px;line-height:17px;color:#151515;">-</div>
<div style="left:1725.5px;top:848.6px;font-size:17px;line-height:17px;color:#151515;letter-spacing:-0.00px;">In progress</div>
<div style="left:1904.5px;top:848.6px;font-size:17px;line-height:17px;color:#151515;letter-spacing:0.43px;">Monica Hemsworth</div>
<div style="left:264px;top:937.45px;width:1737px;height:1.5px;background:#f1f1f1"></div>
<div style="left:304px;top:900.7px;width:18px;height:18px;border-radius:2.5px;border:1.6px solid #7eaaf6;background:#fff"></div>
<svg style="left:348px;top:900.7px" width="18" height="20"><g fill="none" stroke="#4d4d4d" stroke-width="1.15" stroke-linecap="round" stroke-linejoin="round"><path d="M3 2 L6.2 4.6 M14 2 L10.8 4.6"/><path d="M5.6 8.6 Q6 4.2 8.5 4.2 Q11 4.2 11.4 8.6"/><path d="M4.4 8.8 H12.6"/><path d="M4.5 8.8 Q3.8 17.6 8.5 17.6 Q13.2 17.6 12.5 8.8"/><path d="M8.5 9.2 V12.3"/><path d="M1.3 7 Q1.6 10.3 4.6 11.2 M4.4 12.2 Q2.2 13.2 1.6 16.8"/><path d="M15.7 7 Q15.4 10.3 12.4 11.2 M12.6 12.2 Q14.8 13.2 15.4 16.8"/></g></svg>
<div style="left:390.8px;top:904.1px;font-size:16px;line-height:16px;color:#5a5a5a;letter-spacing:0.21px;">DC-I48</div>
<div style="left:455.3px;top:902.9px;font-size:17px;line-height:17px;color:#151515;letter-spacing:-0.02px;">Roofing issue</div>
<div style="left:730.4px;top:902.1px;font-size:17px;line-height:17px;color:#151515;letter-spacing:0.15px;">02:00</div>
<div style="left:912.0px;top:902.1px;font-size:17px;line-height:17px;color:#151515;letter-spacing:0.43px;">Monica Hemsworth</div>
<div style="left:1130.5px;top:902.1px;font-size:17px;line-height:17px;color:#2fb8e2;letter-spacing:0.12px;">Billable</div>
<div style="left:1331.2px;top:899.3000000000001px;width:89.5px;height:26.2px;border-radius:13px;background:#72c849"></div><div style="left:1340.7px;top:904.6px;font-size:17px;line-height:17px;color:#fff;letter-spacing:-0.28px;">Approved</div>
<div style="left:1547.5px;top:902.1px;font-size:17px;line-height:17px;color:#151515;">-</div>
<div style="left:1725.5px;top:902.1px;font-size:17px;line-height:17px;color:#151515;letter-spacing:0.07px;">Yet to Process</div>
<div style="left:1904.5px;top:902.1px;font-size:17px;line-height:17px;color:#151515;letter-spacing:0.43px;">Monica Hemsworth</div>
<div style="left:264px;top:990.95px;width:1737px;height:1.5px;background:#f1f1f1"></div>
<div style="left:304px;top:954.2px;width:18px;height:18px;border-radius:2.5px;border:1.6px solid #7eaaf6;background:#fff"></div>
<svg style="left:348px;top:954.2px" width="18" height="20"><g fill="none" stroke="#4d4d4d" stroke-width="1.15" stroke-linecap="round" stroke-linejoin="round"><path d="M3 2 L6.2 4.6 M14 2 L10.8 4.6"/><path d="M5.6 8.6 Q6 4.2 8.5 4.2 Q11 4.2 11.4 8.6"/><path d="M4.4 8.8 H12.6"/><path d="M4.5 8.8 Q3.8 17.6 8.5 17.6 Q13.2 17.6 12.5 8.8"/><path d="M8.5 9.2 V12.3"/><path d="M1.3 7 Q1.6 10.3 4.6 11.2 M4.4 12.2 Q2.2 13.2 1.6 16.8"/><path d="M15.7 7 Q15.4 10.3 12.4 11.2 M12.6 12.2 Q14.8 13.2 15.4 16.8"/></g></svg>
<div style="left:390.8px;top:957.6px;font-size:16px;line-height:16px;color:#5a5a5a;letter-spacing:0.21px;">DC-I48</div>
<div style="left:455.3px;top:956.4px;font-size:17px;line-height:17px;color:#151515;letter-spacing:-0.02px;">Roofing issue</div>
<div style="left:730.4px;top:955.6px;font-size:17px;line-height:17px;color:#151515;letter-spacing:0.15px;">04:00</div>
<div style="left:912.0px;top:955.6px;font-size:17px;line-height:17px;color:#151515;letter-spacing:0.43px;">Monica Hemsworth</div>
<div style="left:1130.5px;top:955.6px;font-size:17px;line-height:17px;color:#2fb8e2;letter-spacing:0.12px;">Billable</div>
<div style="left:1331.2px;top:952.8000000000001px;width:82.5px;height:26.2px;border-radius:13px;background:#ef2f53"></div><div style="left:1341.0px;top:958.1px;font-size:17px;line-height:17px;color:#fff;letter-spacing:-0.51px;">Rejected</div>
<div style="left:1547.5px;top:955.6px;font-size:17px;line-height:17px;color:#151515;">-</div>
<div style="left:1725.5px;top:955.6px;font-size:17px;line-height:17px;color:#151515;letter-spacing:0.07px;">Yet to Process</div>
<div style="left:1904.5px;top:955.6px;font-size:17px;line-height:17px;color:#151515;letter-spacing:0.43px;">Monica Hemsworth</div>
<div style="left:264px;top:1044.45px;width:1737px;height:1.5px;background:#f1f1f1"></div>
<div style="left:304px;top:1007.7px;width:18px;height:18px;border-radius:2.5px;background:#2a79f4"></div><svg style="left:304px;top:1007.7px" width="18" height="18"><path d="M4.3 9.3 L7.6 12.5 L13.8 6" fill="none" stroke="#fff" stroke-width="2.2" stroke-linecap="round" stroke-linejoin="round"/></svg>
<svg style="left:348px;top:1007.7px" width="18" height="20"><g fill="none" stroke="#4d4d4d" stroke-width="1.15" stroke-linecap="round" stroke-linejoin="round"><path d="M3 2 L6.2 4.6 M14 2 L10.8 4.6"/><path d="M5.6 8.6 Q6 4.2 8.5 4.2 Q11 4.2 11.4 8.6"/><path d="M4.4 8.8 H12.6"/><path d="M4.5 8.8 Q3.8 17.6 8.5 17.6 Q13.2 17.6 12.5 8.8"/><path d="M8.5 9.2 V12.3"/><path d="M1.3 7 Q1.6 10.3 4.6 11.2 M4.4 12.2 Q2.2 13.2 1.6 16.8"/><path d="M15.7 7 Q15.4 10.3 12.4 11.2 M12.6 12.2 Q14.8 13.2 15.4 16.8"/></g></svg>
<div style="left:390.8px;top:1011.1px;font-size:16px;line-height:16px;color:#5a5a5a;letter-spacing:0.21px;">DC-I67</div>
<div style="left:455.3px;top:1009.9px;font-size:17px;line-height:17px;color:#151515;letter-spacing:0.18px;">Replace defective switches</div>
<div style="left:730.4px;top:1009.1px;font-size:17px;line-height:17px;color:#151515;letter-spacing:0.15px;">00:00</div>
<div style="left:730.4px;top:1027.9px;font-size:12px;line-height:12px;color:#444;letter-spacing:-0.02px;">(03:28 PM - 03:28 PM)</div>
<div style="left:912.0px;top:1009.1px;font-size:17px;line-height:17px;color:#151515;letter-spacing:0.43px;">Monica Hemsworth</div>
<div style="left:1130.5px;top:1009.1px;font-size:17px;line-height:17px;color:#2fb8e2;letter-spacing:0.12px;">Billable</div>
<div style="left:1331.2px;top:1006.3000000000001px;width:77.5px;height:26.2px;border-radius:13px;background:#788d9a"></div><div style="left:1341.2px;top:1011.6px;font-size:17px;line-height:17px;color:#fff;letter-spacing:-0.70px;">Pending</div>
<div style="left:1547.5px;top:1009.1px;font-size:17px;line-height:17px;color:#151515;">-</div>
<div style="left:1725.5px;top:1009.1px;font-size:17px;line-height:17px;color:#151515;">-</div>
<div style="left:1904.5px;top:1009.1px;font-size:17px;line-height:17px;color:#151515;letter-spacing:0.43px;">Monica Hemsworth</div>
<div style="left:315px;top:226px;width:237.5px;height:129px;background:#fff;border-radius:5px;box-shadow:0 2px 14px rgba(0,0,0,0.13)"></div>
<svg style="left:421px;top:218px" width="26" height="10"><path d="M0 9.5 L12.5 0.5 L25 9.5 Z" fill="#fff"/></svg>
<div style="left:315px;top:310.4px;width:237.5px;height:38.4px;background:#f2f6fe"></div>
<div style="left:332.4px;top:244.8px;width:15.5px;height:15.2px;background:#6dc245"></div>
<div style="left:358.0px;top:243.4px;font-size:18px;line-height:18px;color:#111;letter-spacing:-0.61px;">Approved</div>
<div style="left:332.4px;top:284.1px;width:15.5px;height:15.2px;background:#788d9a"></div>
<div style="left:358.0px;top:282.6px;font-size:18px;line-height:18px;color:#111;letter-spacing:-1.01px;">Pending</div>
<div style="left:332.4px;top:323.4px;width:15.5px;height:15.2px;background:#ef2f53"></div>
<div style="left:358.0px;top:321.8px;font-size:18px;line-height:18px;color:#1f74e8;letter-spacing:-0.88px;">Rejected</div>
<div style="left:263px;top:1164px;width:1738px;height:9px;background:linear-gradient(to bottom,rgba(0,0,0,0),rgba(0,0,0,0.035))"></div>
<div style="left:263px;top:1172.5px;width:1738px;height:43.5px;background:#fff;border-top:1px solid #ececec"></div>
<div style="left:298.7px;top:1187.8px;font-size:16px;line-height:16px;color:#4f4f4f;letter-spacing:-0.36px;">Billable</div>
<div style="left:360.4px;top:1186.8px;font-size:17px;line-height:17px;color:#27b6e4;letter-spacing:0.09px;">21:04</div>
<div style="left:408.7px;top:1186.8px;font-size:17px;line-height:17px;color:#333;-webkit-text-stroke:0.55px #333;">h</div>
<div style="left:444.5px;top:1187.8px;font-size:16px;line-height:16px;color:#4f4f4f;letter-spacing:-0.26px;">Non Billable</div>
<div style="left:539.3px;top:1186.8px;font-size:17px;line-height:17px;color:#f7982a;letter-spacing:0.09px;">03:00</div>
<div style="left:587.6px;top:1186.8px;font-size:17px;line-height:17px;color:#333;-webkit-text-stroke:0.55px #333;">h</div>
<div style="left:623.2px;top:1187.8px;font-size:16px;line-height:16px;color:#4f4f4f;letter-spacing:-0.27px;">Total</div>
<div style="left:668.6px;top:1186.8px;font-size:17px;line-height:17px;color:#1f78f2;letter-spacing:0.15px;">24:04</div>
<div style="left:716.7px;top:1186.8px;font-size:17px;line-height:17px;color:#333;-webkit-text-stroke:0.55px #333;">h</div>
<div style="left:740px;top:1185px;width:1.2px;height:20px;background:#cfcfcf"></div>
<div style="left:751.9px;top:1187.8px;font-size:16px;line-height:16px;color:#4f4f4f;letter-spacing:-0.28px;">Total Cost</div>
<div style="left:834.0px;top:1186.8px;font-size:17px;line-height:17px;color:#2ea52e;letter-spacing:0.04px;">$ 220.00</div>
<div style="left:1621.4px;top:1186.6px;font-size:17px;line-height:17px;color:#111;letter-spacing:-0.02px;">Total Count: 12</div>
<div style="left:1747px;top:1185px;width:1px;height:18px;background:#d6d6d6"></div>
<svg style="left:1758px;top:1184px" width="18" height="20"><g fill="none" stroke="#777" stroke-width="1.3" stroke-linecap="round" stroke-linejoin="round"><path d="M9 4.8 L4 10.2 L9 15.6 M14.5 4.8 L9.5 10.2 L14.5 15.6"/></g></svg>
<svg style="left:1794px;top:1183.5px" width="21" height="21"><g fill="none" stroke="#777" stroke-width="1.2" stroke-linecap="round" stroke-linejoin="round"><circle cx="10.3" cy="10.1" r="8.9"/><path d="M11.6 6.5 L8.2 10.1 L11.6 13.7"/></g></svg>
<div style="left:1841.0px;top:1185.8px;font-size:16px;line-height:16px;color:#111;letter-spacing:-0.73px;">1 - 12</div>
<svg style="left:1904px;top:1183.5px" width="21" height="21"><g fill="none" stroke="#777" stroke-width="1.2" stroke-linecap="round" stroke-linejoin="round"><circle cx="10.3" cy="10.1" r="8.9"/><path d="M9 6.5 L12.4 10.1 L9 13.7"/></g></svg>
<svg style="left:1942px;top:1184px" width="18" height="20"><g fill="none" stroke="#777" stroke-width="1.3" stroke-linecap="round" stroke-linejoin="round"><path d="M4 4.8 L9 10.2 L4 15.6 M9.5 4.8 L14.5 10.2 L9.5 15.6"/></g></svg>
</body></html>
